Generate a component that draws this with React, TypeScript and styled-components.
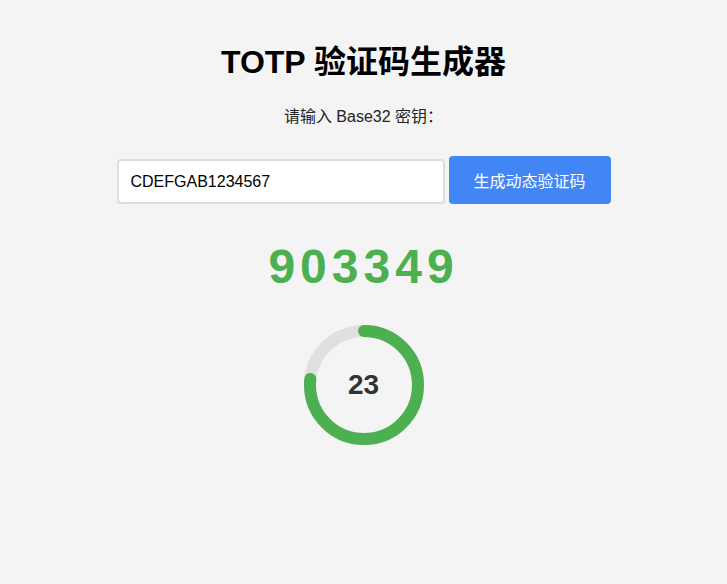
import React from 'react';
import styled, { createGlobalStyle } from 'styled-components';

const PERIOD = 30;
const RADIUS = 54;
const STROKE = 12;
const CIRCUMFERENCE = 2 * Math.PI * RADIUS;

const GlobalStyle = createGlobalStyle`
  html, body {
    margin: 0;
    padding: 0;
    background: #f4f4f4;
  }
  body {
    font-family: "Liberation Sans", Arial, "Noto Sans CJK SC", sans-serif;
    color: #000;
  }
`;

function App() {
  const secret = 'CDEFGAB1234567';
  const code = '903349';
  const remaining = 23;
  const offset = CIRCUMFERENCE * (1 - remaining / PERIOD);

  return (
    <>
      <GlobalStyle />
      <Page>
        <Title>TOTP 验证码生成器</Title>
        <Label htmlFor="secret">请输入 Base32 密钥：</Label>
        <Form>
          <SecretInput id="secret" defaultValue={secret} />
          <GenerateButton type="button">生成动态验证码</GenerateButton>
        </Form>
        <Code>{code}</Code>
        <Timer>
          <svg width="120" height="120" viewBox="0 0 120 120">
            <circle
              cx="60"
              cy="60"
              r={RADIUS}
              fill="none"
              stroke="#e0e0e0"
              strokeWidth={STROKE}
            />
            <circle
              cx="60"
              cy="60"
              r={RADIUS}
              fill="none"
              stroke="#4caf50"
              strokeWidth={STROKE}
              strokeLinecap="round"
              strokeDasharray={CIRCUMFERENCE}
              strokeDashoffset={offset}
              transform="rotate(-90 60 60)"
            />
          </svg>
          <Seconds>{remaining}</Seconds>
        </Timer>
      </Page>
    </>
  );
}

const Page = styled.main`
  display: flex;
  flex-direction: column;
  align-items: center;
  padding-top: 42px;
`;

const Title = styled.h1`
  margin: 0;
  font-size: 32px;
  line-height: 40px;
  font-weight: 700;
  color: #000;
`;

const Label = styled.label`
  margin-top: 25px;
  font-size: 16px;
  line-height: 20px;
  color: #222;
`;

const Form = styled.div`
  display: flex;
  align-items: flex-start;
  gap: 4px;
  margin-top: 29px;
`;

const SecretInput = styled.input`
  box-sizing: border-box;
  width: 328px;
  height: 45px;
  margin-top: 3px;
  padding: 0 12px;
  border: 2px solid #ddd;
  border-radius: 4px;
  background: #fff;
  font-family: inherit;
  font-size: 16px;
  color: #000;
  outline: none;
`;

const GenerateButton = styled.button`
  box-sizing: border-box;
  width: 162px;
  height: 48px;
  padding: 0;
  border: none;
  border-radius: 4px;
  background: #4285f4;
  color: #fff;
  font-family: inherit;
  font-size: 16px;
  cursor: pointer;
`;

const Code = styled.div`
  margin-top: 35px;
  font-size: 48px;
  line-height: 56px;
  font-weight: 700;
  letter-spacing: 5px;
  color: #4caf50;
`;

const Timer = styled.div`
  position: relative;
  width: 120px;
  height: 120px;
  margin-top: 30px;

  svg {
    display: block;
  }
`;

const Seconds = styled.span`
  position: absolute;
  inset: 0;
  display: flex;
  align-items: center;
  justify-content: center;
  font-size: 28px;
  font-weight: 700;
  color: #333;
`;

export default App;
